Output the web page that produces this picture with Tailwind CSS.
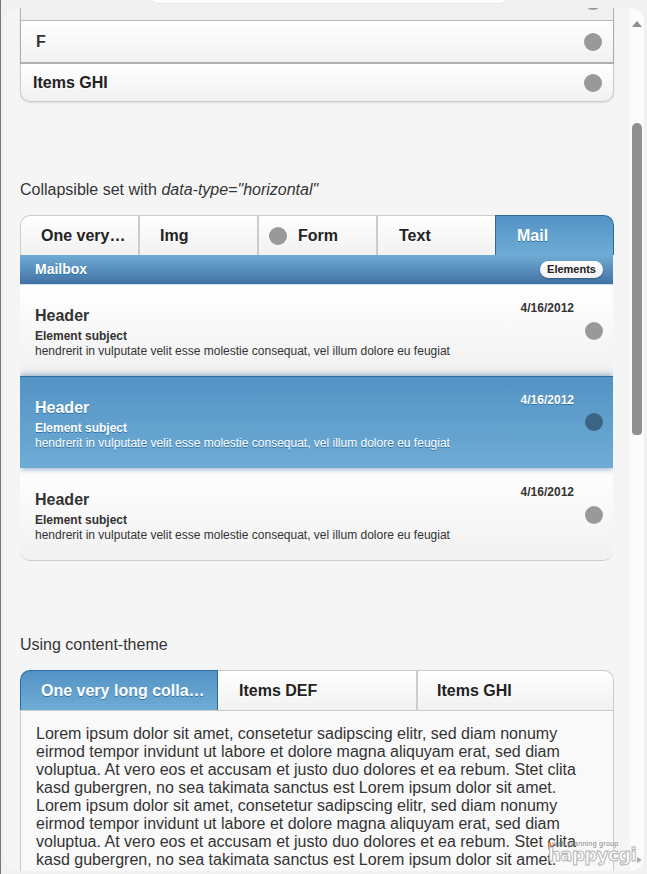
<!DOCTYPE html>
<html>
<head>
<meta charset="utf-8">
<script src="https://cdn.jsdelivr.net/npm/@tailwindcss/browser@4"></script>
</head>
<body class="m-0 overflow-hidden bg-[#f1f1f1]">
<div class="relative w-[647px] h-[874px] overflow-hidden bg-[#f1f1f1] font-['Liberation_Sans',Arial,sans-serif] text-[#333]">
  <div class="absolute left-0 top-0 w-[1px] h-full bg-[#777]"></div>
  <div class="absolute left-[149px] top-[-10px] w-[360px] h-[14px] bg-white rounded-b-[10px] border border-[#e8e8e8]"></div>

  <div class="absolute left-[4px] top-[8px] w-[640px] h-[863px] flex rounded-[14px] overflow-hidden bg-[#f5f5f5]">
    <!-- content -->
    <div class="w-[626px] pl-[16px] pr-[16px] shrink-0">
      <!-- first list -->
      <div class="w-[594px] rounded-b-[10px] shadow-[0_1px_2px_rgba(0,0,0,.1)]">
        <div class="h-[13px] overflow-hidden flex justify-end pr-[11px] border-x border-b border-[#b5b5b5] bg-[#f1f1f1]">
          <span class="block w-[18px] h-[18px] rounded-full bg-[#999] mt-[-16px]"></span>
        </div>
        <div class="h-[43px] flex items-center justify-between pl-[15px] pr-[11px] border-x border-b-2 border-x-[#aaa] border-b-[#b0b0b0] bg-gradient-to-b from-white to-[#f1f1f1]">
          <span class="text-[16px] font-bold [text-shadow:0_1px_0_#fff]">F</span>
          <span class="block w-[18px] h-[18px] rounded-full bg-[#999]"></span>
        </div>
        <div class="h-[38px] flex items-center justify-between pl-[12px] pr-[11px] border-x border-b border-[#ccc] rounded-b-[10px] bg-gradient-to-b from-white to-[#f1f1f1]">
          <span class="text-[16px] font-bold text-[#222] [text-shadow:0_1px_0_#fff]">Items GHI</span>
          <span class="block w-[18px] h-[18px] rounded-full bg-[#999]"></span>
        </div>
      </div>

      <p class="mt-[78px] text-[16px] leading-[20px] text-[#333] [text-shadow:0_1px_0_#fff]">Collapsible set with <em>data-type="horizontal"</em></p>

      <!-- horizontal tabs -->
      <div class="mt-[15px] w-[594px] flex h-[40px] text-[16px] font-bold text-[#222] [text-shadow:0_1px_0_#fff]">
        <div class="w-[118px] flex items-center pl-[20px] border-l border-t border-[#ccc] rounded-tl-[10px] bg-gradient-to-b from-white to-[#f1f1f1]">One very…</div>
        <div class="w-[119px] flex items-center pl-[20px] border-l-2 border-t border-[#ccc] bg-gradient-to-b from-white to-[#f1f1f1]">Img</div>
        <div class="w-[119px] flex items-center pl-[10px] gap-[11px] border-l-2 border-t border-[#ccc] bg-gradient-to-b from-white to-[#f1f1f1]"><span class="block w-[18px] h-[18px] rounded-full bg-[#999]"></span><span>Form</span></div>
        <div class="w-[119px] flex items-center pl-[21px] border-l-2 border-t border-[#ccc] bg-gradient-to-b from-white to-[#f1f1f1]">Text</div>
        <div class="w-[119px] flex items-center pl-[21px] border-x border-t border-[#2a6a9f] rounded-tr-[10px] bg-gradient-to-b from-[#5393c5] to-[#6facd5] text-white [text-shadow:0_1px_0_#3373a5]">Mail</div>
      </div>

      <!-- inset list -->
      <div class="w-[593px] rounded-b-[10px] bg-[#f1f1f1] border-b border-[#ccc] [overflow-x:clip]">
        <div class="h-[30px] flex items-center justify-between pl-[15px] pr-[10px] border-b border-[#cfe0ee] bg-gradient-to-b from-[#6facd5] to-[#4272a4]">
          <span class="text-[14px] font-bold text-white [text-shadow:0_1px_0_#3373a5]">Mailbox</span>
          <span class="block px-[7px] h-[17px] leading-[16px] rounded-full bg-gradient-to-b from-white to-[#f1f1f1] text-[11px] font-bold text-[#222] shadow-[0_1px_2px_rgba(0,0,0,.3)]">Elements</span>
        </div>
        <div class="relative h-[91px] pl-[15px] pt-[22px] bg-gradient-to-b from-white to-[#f1f1f1]">
          <div class="flex justify-between pr-[39px]"><h3 class="text-[16px] leading-[18px] font-bold">Header</h3><span class="text-[12px] leading-[14px] font-bold mt-[-6px]">4/16/2012</span></div>
          <p class="text-[12px] leading-[14px] font-bold mt-[4px]">Element subject</p>
          <p class="text-[12px] leading-[15px] mt-[1px]">hendrerit in vulputate velit esse molestie consequat, vel illum dolore eu feugiat</p>
          <span class="absolute right-[10px] top-[37px] block w-[18px] h-[18px] rounded-full bg-[#999]"></span>
        </div>
        <div class="relative z-10 h-[92px] pl-[15px] pt-[22px] border-t border-[#2a6a9f] bg-gradient-to-b from-[#5393c5] to-[#6facd5] text-white shadow-[0_0_7px_rgba(40,100,150,.7)] [text-shadow:0_1px_0_#3373a5]">
          <div class="flex justify-between pr-[39px]"><h3 class="text-[16px] leading-[18px] font-bold">Header</h3><span class="text-[12px] leading-[14px] font-bold mt-[-6px]">4/16/2012</span></div>
          <p class="text-[12px] leading-[14px] font-bold mt-[4px]">Element subject</p>
          <p class="text-[12px] leading-[15px] mt-[1px]">hendrerit in vulputate velit esse molestie consequat, vel illum dolore eu feugiat</p>
          <span class="absolute right-[10px] top-[36px] block w-[18px] h-[18px] rounded-full bg-[#3c6485]"></span>
        </div>
        <div class="relative h-[92px] pl-[15px] pt-[23px] rounded-b-[10px] bg-gradient-to-b from-white to-[#f1f1f1]">
          <div class="flex justify-between pr-[39px]"><h3 class="text-[16px] leading-[18px] font-bold">Header</h3><span class="text-[12px] leading-[14px] font-bold mt-[-6px]">4/16/2012</span></div>
          <p class="text-[12px] leading-[14px] font-bold mt-[4px]">Element subject</p>
          <p class="text-[12px] leading-[15px] mt-[1px]">hendrerit in vulputate velit esse molestie consequat, vel illum dolore eu feugiat</p>
          <span class="absolute right-[10px] top-[38px] block w-[18px] h-[18px] rounded-full bg-[#999]"></span>
        </div>
      </div>

      <p class="mt-[74px] text-[16px] leading-[20px] text-[#333] [text-shadow:0_1px_0_#fff]">Using content-theme</p>

      <div class="mt-[15px] w-[594px] flex h-[40px] text-[16px] font-bold text-[#222] [text-shadow:0_1px_0_#fff]">
        <div class="w-[198px] flex items-center pl-[20px] border-x border-t border-[#2a6a9f] rounded-tl-[10px] bg-gradient-to-b from-[#5393c5] to-[#6facd5] text-white [text-shadow:0_1px_0_#3373a5]">One very long colla…</div>
        <div class="w-[198px] flex items-center pl-[21px] border-t border-[#ccc] bg-gradient-to-b from-white to-[#f1f1f1]">Items DEF</div>
        <div class="w-[198px] flex items-center pl-[19px] border-l-2 border-r border-t border-[#ccc] rounded-tr-[10px] bg-gradient-to-b from-white to-[#f1f1f1]">Items GHI</div>
      </div>
      <div class="w-[594px] h-[300px] px-[15px] pt-[14px] border-x border-t border-[#ccc] bg-[#f9f9f9] text-[16px] leading-[18px] text-[#333] [text-shadow:0_1px_0_#fff]">
        Lorem ipsum dolor sit amet, consetetur sadipscing elitr, sed diam nonumy eirmod tempor invidunt ut labore et dolore magna aliquyam erat, sed diam voluptua. At vero eos et accusam et justo duo dolores et ea rebum. Stet clita kasd gubergren, no sea takimata sanctus est Lorem ipsum dolor sit amet. Lorem ipsum dolor sit amet, consetetur sadipscing elitr, sed diam nonumy eirmod tempor invidunt ut labore et dolore magna aliquyam erat, sed diam voluptua. At vero eos et accusam et justo duo dolores et ea rebum. Stet clita kasd gubergren, no sea takimata sanctus est Lorem ipsum dolor sit amet.
      </div>
    </div>
    <!-- scrollbar -->
    <div class="w-[14px] shrink-0 bg-[#fbfbfb] pt-[13px] pl-[2px]">
      <svg width="10" height="6" viewBox="0 0 10 6" class="block"><polygon points="5,0 10,6 0,6" fill="#8f8f8f"/></svg>
      <div class="mt-[96px] w-[10px] h-[312px] rounded-t-[5px] rounded-b-[4px] bg-[#8f8f8f]"></div>
    </div>
  </div>

  <!-- watermark -->
  <div class="absolute left-[547px] top-[838px] w-[96px] h-[30px]">
    <span class="absolute left-[1px] top-[4px] w-[3px] h-[8px] rounded-[2px] bg-[#e8853a]"></span>
    <span class="absolute left-[5px] top-[2px] text-[7px] leading-[7px] tracking-[0.3px] text-[#888] whitespace-nowrap">web planning group</span>
    <span class="absolute left-[1px] top-[5px] text-[18px] leading-[24px] font-['DejaVu_Sans',sans-serif] font-bold tracking-[-0.5px] text-white [-webkit-text-stroke:1px_#b5b5b5] whitespace-nowrap">happycgi</span>
    <svg width="5" height="6" viewBox="0 0 5 6" class="absolute left-[90px] top-[19px]"><polygon points="0,0 5,3 0,6" fill="#aaa"/></svg>
  </div>
</div>
</body>
</html>
